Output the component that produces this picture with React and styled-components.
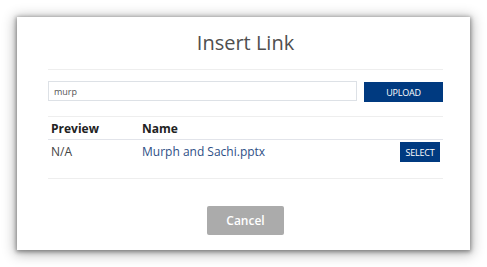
import styled, { createGlobalStyle } from "styled-components"

const GlobalStyle = createGlobalStyle`
    body {
        margin: 0;
        background: #FFFFFF;
        font-family: "Open Sans", "Noto Sans", sans-serif;
    }
`

const Page = styled.div`
    padding: 17px;
`

const Dialog = styled.div`
    width: 453px;
    height: 233px;
    box-sizing: border-box;
    background: #FFFFFF;
    box-shadow: 0 1px 4px 1px rgba(0, 0, 0, 0.35), 0 2px 12px 2px rgba(0, 0, 0, 0.3);
    padding: 0 27px 14px 31px;
    display: flex;
    flex-direction: column;
`

const Title = styled.h2`
    margin: 12px 0 12px;
    font-size: 20px;
    line-height: 28px;
    font-weight: 500;
    text-align: center;
    color: #4F4F4F;
`

const Divider = styled.div`
    height: 1px;
    background: ${props => props.dark ? "#E2E4EA" : "#EEEEEE"};
    margin-top: ${props => props.gap || 0}px;
`

const SearchRow = styled.div`
    display: flex;
    align-items: center;
    gap: 7px;
    margin-top: 10px;
`

const SearchInput = styled.input`
    flex: 1;
    height: 20px;
    box-sizing: border-box;
    border: 1px solid #DDE1E6;
    padding: 0 5px;
    font-family: inherit;
    font-size: 9px;
    color: #555555;
    outline: none;
`

const Button = styled.button`
    border: none;
    background: #003A80;
    color: #FFFFFF;
    font-family: inherit;
    font-size: 9px;
    letter-spacing: -0.2px;
    padding: 0;
    cursor: pointer;
`

const UploadButton = styled(Button)`
    width: 79px;
    height: 20px;
    margin-top: 2px;
`

const SelectButton = styled(Button)`
    width: 40px;
    height: 20px;
    margin-right: 3px;
`

const TableRow = styled.div`
    display: grid;
    grid-template-columns: 91px 1fr auto;
    align-items: ${props => props.head ? "center" : "start"};
    height: ${props => props.head ? 23 : 39}px;
    padding: ${props => props.head ? "0 0 0 3px" : "2px 0 0 3px"};
    box-sizing: border-box;
    border-bottom: 1px solid ${props => props.head ? "#E2E4EA" : "#EEEEEE"};
    font-size: 12px;
`

const HeadCell = styled.div`
    font-weight: 700;
    color: #222222;
`

const Cell = styled.div`
    line-height: 20px;
    color: ${props => props.link ? "#2E4F86" : "#444444"};
`

const Footer = styled.div`
    display: flex;
    justify-content: center;
    margin-top: 27px;
`

const CancelButton = styled.button`
    width: 77px;
    height: 29px;
    border: none;
    border-radius: 2px;
    background: #ABABAB;
    color: #FFFFFF;
    font-family: inherit;
    font-size: 12px;
    font-weight: 600;
    cursor: pointer;
`

const App = () => {
    return (
        <Page>
            <GlobalStyle />
            <Dialog>
                <Title>Insert Link</Title>
                <Divider />
                <SearchRow>
                    <SearchInput defaultValue="murp" />
                    <UploadButton>UPLOAD</UploadButton>
                </SearchRow>
                <Divider gap={14} />
                <TableRow head>
                    <HeadCell>Preview</HeadCell>
                    <HeadCell>Name</HeadCell>
                    <div />
                </TableRow>
                <TableRow>
                    <Cell>N/A</Cell>
                    <Cell link>Murph and Sachi.pptx</Cell>
                    <SelectButton>SELECT</SelectButton>
                </TableRow>
                <Footer>
                    <CancelButton>Cancel</CancelButton>
                </Footer>
            </Dialog>
        </Page>
    )
}

export default App
